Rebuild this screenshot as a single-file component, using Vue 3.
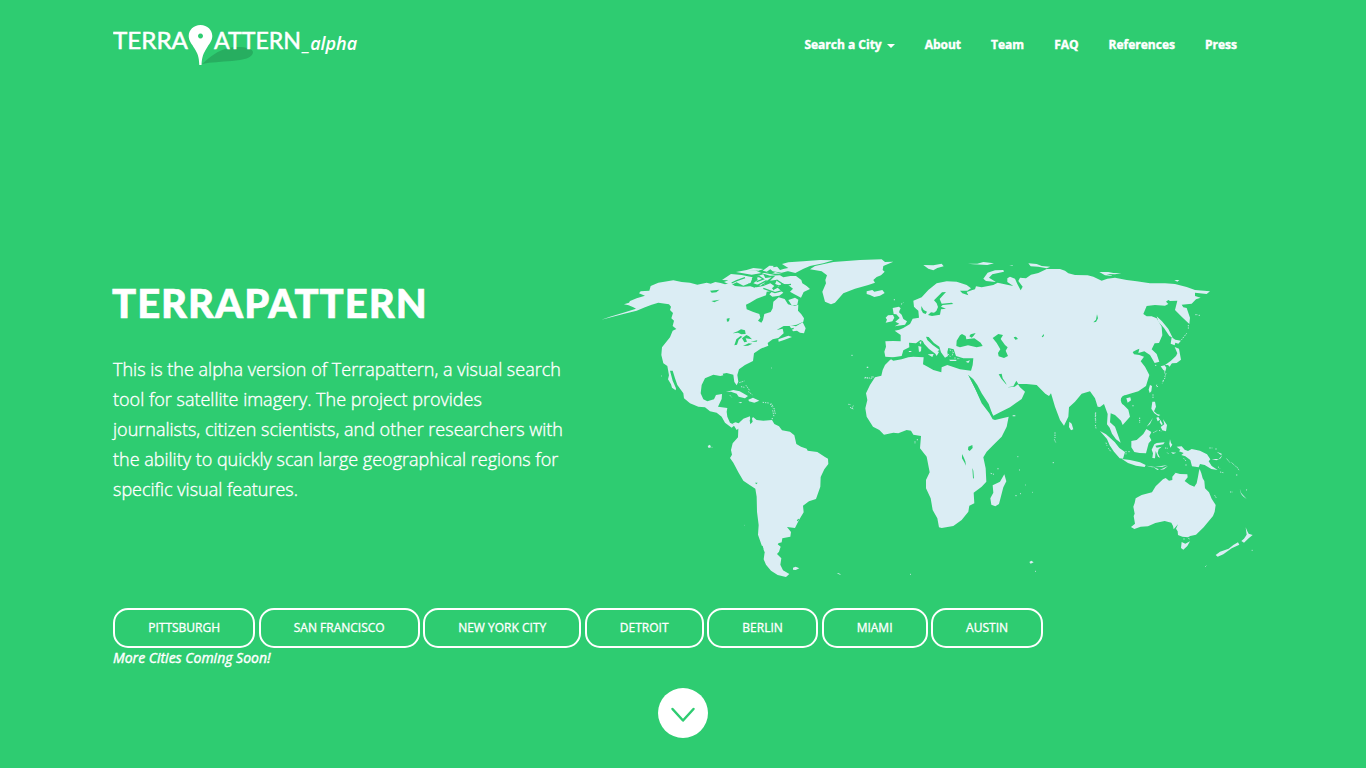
<script setup>
const nav = ['About', 'Team', 'FAQ', 'References', 'Press']
const cities = [
  { name: 'Pittsburgh', w: 142.3 },
  { name: 'San Francisco', w: 160.8 },
  { name: 'New York City', w: 158.2 },
  { name: 'Detroit', w: 118.8 },
  { name: 'Berlin', w: 111 },
  { name: 'Miami', w: 106 },
  { name: 'Austin', w: 112 },
]
</script>

<template>
  <div class="page">
    <header class="bar">
      <a class="brand">
        <svg class="logo" width="190" height="44" viewBox="0 0 190 44">
          <path class="shadow" d="M89 42 C98 34 104 29 115 26 C125 24 139 25 140 30 C140 36 130 38 119 39 C108 40 98 40 89 42Z" />
          <text x="0" y="26.500" textLength="75" lengthAdjust="spacingAndGlyphs">TERRA</text>
          <text x="101" y="26.500" textLength="87" lengthAdjust="spacingAndGlyphs">ATTERN</text>
          <path class="pin" fill-rule="evenodd" d="M87.500 3 C94.500 3 99.300 8 99.300 14 C99.300 19 96 22 93.500 26.500 C90.500 31.500 89 34 88.500 43 H86.300 C86 34 84.500 31.500 81.500 26.500 C79 22 75.700 19 75.700 14 C75.700 8 80.500 3 87.500 3Z M87.500 11.500 a2.500 2.500 0 1 0 .01 0Z" />
        </svg>
        <span class="alpha">_alpha</span>
      </a>
      <nav class="nav">
        <a class="drop">Search a City<i class="caret"></i></a>
        <a v-for="n in nav" :key="n">{{ n }}</a>
      </nav>
    </header>

    <main class="hero">
      <div class="copy">
        <h1>TERRAPATTERN</h1>
        <p>
          This is the alpha version of Terrapattern, a visual search<br />
          tool for satellite imagery. The project provides<br />
          journalists, citizen scientists, and other researchers with<br />
          the ability to quickly scan large geographical regions for<br />
          specific visual features.
        </p>
      </div>
      <svg class="map" width="660" height="330" viewBox="600 255 660 330">
        <!-- North America and Greenland -->
        <g transform="translate(590 250) scale(.33333)">
          <path d="M34 209L60 200L100 188L138 176L130 172L116 166L102 163L117 158L120 153L140 145L165 137L147 130L152 124L178 122L182 108L205 98L250 91L275 96L300 98L322 104L350 98L362 101L376 96L392 99L405 103L420 99L435 108L460 110L480 109L500 112L520 108L541 100L553 108L546 115L552 122L530 125L528 136L500 146L480 158L468 164L470 178L490 186L508 192L511 203L504 212L514 218L519 210L523 192L542 186L548 175L550 155L566 142L584 147L594 163L613 168L625 164L624 182L634 193L642 205L640 215L620 224L598 228L581 228L560 240L578 236L581 250L565 264L548 268L533 279L535 287L512 296L492 310L489 333L465 345L447 358L442 375L445 395L440 406L433 396L430 374L410 369L398 371L400 376L391 378L370 374L345 385L335 405L332 430L340 448L352 454L372 448L378 435L396 432L395 447L384 470L412 474L410 485L412 500L420 518L432 524L440 518L448 533L440 540L432 527L425 533L405 518L395 500L380 488L360 484L345 472L325 470L300 460L282 445L280 430L262 405L255 385L248 362L240 362L248 392L258 415L257 421L246 413L243 403L234 388L237 376L232 348L220 340L214 315L216 292L240 262L248 242L259 237L248 228L252 212L244 205L249 189L240 180L243 170L237 163L205 158L185 164L165 172L140 182L100 192Z" />
          <path d="M396 90L423 72L455 75L488 82L482 98L460 107L440 97L423 105L402 96L415 91ZM438 66L470 60L498 62L515 69L485 74L455 69ZM470 60L490 54L520 57L506 62ZM500 79L520 73L526 84L545 82L531 92L512 107L490 100L503 90ZM516 70L530 66L543 72L556 66L576 72L568 76L540 77ZM518 62L538 47L560 48L570 60L598 62L575 68L548 64L541 58L530 65ZM576 42L595 37L640 34L690 30L730 31L700 40L660 48L639 57L616 69L592 63L560 63L583 56L595 54Z" />
          <path d="M540 92L556 77L570 76L580 82L601 78L618 78L634 90L637 100L650 108L660 117L641 126L633 143L612 132L600 125L609 116L592 103L574 102L566 111L555 103L561 89ZM595 150L615 143L625 149L622 164L606 167ZM552 119L563 113L580 128L568 137L547 140L538 133ZM597 225L618 229L638 217L647 235L642 250L630 248L621 242L609 244ZM565 268L595 257L606 261L582 270L566 275Z" />
          <path d="M408 426L430 420L449 424L474 438L465 445L446 440L440 431L423 425ZM475 449L489 443L508 452L493 458L477 454ZM445 456l12 1-5 3z" />
          <path class="dots" d="M448 398L463 393M453 410L463 412M468 406L480 423M475 425L487 434M518 457L536 459M541 462L549 475M548 481L552 500M420 436l5 6M543 354h2M213 378h2M520 100l6 4" />
          <path d="M660 58L675 48L730 36L810 30L875 28L885 36L910 35L880 48L878 60L884 65L873 76L860 81L850 90L855 98L835 105L795 116L760 130L735 158L723 163L705 155L697 125L708 100L706 90L711 76L695 64Z" />
          <path d="M830 124L847 120L853 125L877 120L884 129L870 137L853 141L840 135L830 132Z" />
          <path class="water" d="M360 122L388 119L379 127L365 128ZM364 153L389 149L373 157ZM410 206L419 204L417 214L411 215ZM428 250L443 244L453 238L465 241L467 252L454 253L444 248ZM433 286L439 268L452 258L457 260L446 269L441 284ZM456 265L469 255L477 259L486 268L467 265L471 275L463 277ZM459 288L476 280L487 281L474 287ZM482 275L502 271L500 275Z" />
          <path class="cut" d="M425 99L440 92L465 83M486 86L507 79L520 87L500 95M475 102L493 111L530 92M560 90L575 100L590 108M508 64L555 73L616 72M520 115L555 128L590 118M551 102L567 108L603 103M550 50L575 45M595 240L611 235" />
        </g>

        <!-- South America -->
        <g transform="translate(680 390) scale(.33333)">
          <path d="M157 101L166 97L176 100L190 86L210 79L211 93L219 81L230 90L250 92L276 90L283 102L297 109L306 121L330 125L343 136L349 162L363 170L380 176L383 182L412 186L435 201L444 206L445 222L433 238L422 261L421 290L408 327L387 334L369 347L371 367L357 390L345 414L321 411L333 426L331 440L307 445L305 457L293 463L302 470L297 485L291 492L304 505L301 524L309 541L328 552L318 561L293 555L273 542L258 524L251 508L254 487L245 466L234 434L236 405L231 365L230 320L226 296L210 286L190 272L175 247L160 218L150 204L156 194L153 180L158 160L174 142L175 116Z" />
          <path d="M83 168l7-4 3 8-7 2zM339 533l8-3 11 5-11 5-8-1zM470 550l7 0 7 6z" />
          <path class="dots" d="M273 40L280 50M282 54L286 72M275 86h4M505 43l8 1M515 56l5-9M193 406h1M95 172h2" />
          <path class="water" d="M225 278l8 0-4 5zM209 91l6-9 3 13-7 8z" />
          <path class="cut" d="M246 468L249 478M245 485L252 490M295 462L302 459M356 387L352 393" />
        </g>

        <!-- Africa -->
        <g transform="translate(850 340) scale(.33333)">
          <path d="M120 60L105 75L98 90L94 107L75 112L60 135L48 160L52 180L46 205L50 230L69 260L88 270L102 284L130 278L145 280L170 270L183 272L190 284L213 288L210 325L230 350L239 397L228 420L228 445L242 475L248 510L262 535L267 562L275 564L310 558L335 540L355 515L358 497L373 490L371 458L395 440L409 425L407 385L400 352L410 335L430 315L455 290L470 260L476 230L460 234L435 240L428 238L418 220L395 190L375 145L355 105L400 90L340 20L150 40Z" />
          <path d="M463 403L469 424L460 442L447 492L436 499L424 494L421 475L430 458L428 436L450 425Z" />
          <path d="M488 226h8v3h-8zM538 666l6-4 7 5-9 4z" />
          <path class="dots" d="M43 114L60 114M64 111L72 110M51 82h5M4 46h4M0 202L10 207M195 304v8M202 297v5M422 400l10 3M496 467h5M510 461h3M526 435h2M502 350h3M507 390h3M180 703h3M555 694h3M547 457h2M444 384v4" />
          <path class="water" d="M355 320l12-5 1 9-9 9-5-4zM336 342l5 10 5 12 2 13-5-10-7-12zM367 384l3 8 2 24-3-2z" />
        </g>

        <!-- Europe and Asia -->
        <g transform="translate(860 250) scale(.33333)">
          <path d="M76 320L73 305L78 290L76 274L100 273L122 274L122 255L104 242L118 239L130 234L150 222L158 206L177 203L175 182L168 176L162 170L160 152L185 142L205 120L230 100L260 94L290 95L320 105L333 115L322 122L300 122L307 130L325 136L320 126L335 121L345 118L348 109L365 112L400 105L413 98L445 105L460 108L442 96L442 85L450 80L465 86L472 102L482 121L488 110L475 93L480 83L498 85L513 74L535 69L560 57L600 57L615 62L625 70L645 75L683 76L700 80L725 92L742 86L765 83L800 90L830 94L870 100L915 100L945 102L980 111L1005 120L1050 124L1040 132L1005 128L1005 138L1022 143L1008 148L995 161L965 164L970 172L980 174L990 203L988 222L965 200L945 180L952 152L930 153L925 150L918 155L925 162L915 167L885 165L860 168L850 192L860 199L875 199L890 205L905 230L907 256L897 279L884 280L875 298L890 312L898 335L884 339L870 315L853 304L835 309L838 296L829 300L818 306L822 313L838 315L852 320L842 334L855 350L868 375L858 408L835 424L805 433L788 438L782 450L785 459L805 479L810 500L788 525L783 512L765 495L752 490L750 517L765 530L775 558L782 578L768 568L756 551L749 533L741 523L743 492L732 462L720 471L713 470L705 445L690 424L665 431L645 455L627 472L625 500L612 527L600 510L585 470L573 430L567 438L556 431L530 405L500 402L475 402L469 392L460 409L442 412L438 400L428 385L425 371L416 373L424 386L440 405L447 412L464 410L474 403L480 412L495 425L485 447L450 472L420 487L400 497L385 470L360 430L325 375L300 335Z" />
          <path class="water" d="M92 327L100 322L125 318L130 301L148 292L147 278L168 280L181 270L190 274L200 284L218 300L226 307L239 300L218 285L202 270L198 260L206 261L222 279L238 290L243 307L255 323L264 318L262 306L265 294L281 298L288 318L310 325L340 325L338 345L333 362L300 358L262 345L245 352L244 367L220 360L203 350L189 343L191 322L160 320L145 322L125 328L100 332Z" />
          <path class="water" d="M289 288L290 272L300 256L306 252L317 258L319 268L343 265L362 278L368 288L350 292L324 286L300 292ZM328 259L332 253L347 249L341 257L335 263ZM398 264L415 252L429 255L422 267L435 285L443 292L437 302L444 318L432 324L416 319L414 309L421 298L410 279ZM461 262L468 260L474 267L466 269ZM545 260l6-8 1 5-4 5zM711 193l3 12-6 11-8 1 8-8zM564 254l9-1M258 126L246 127L231 142L222 151L230 160L234 171L229 183L222 188L213 187L204 195L216 198L240 194L243 178L258 176L243 170L248 165L280 162L275 158L245 161L239 147ZM184 168L191 180L201 185L197 192L189 189L184 180ZM325 375L340 388L352 405L365 430L386 462L398 495L378 475L360 445L345 415Z" />
          <path d="M187 271L200 278L214 293L237 306L230 318L226 311L207 297L193 282ZM203 313L221 312L217 321ZM175 288L184 290L183 304L177 306ZM178 276l6-2-1 10zM267 329h22v4h-18zM317 335l13-4-5 8zM146 303h8v3h-7z" />
          <path class="dots" d="M264 312l7 8M269 300l9 3M280 306l-3 10M285 322v6M292 326h8" />
          <path d="M98 174L117 170L122 175L119 181L117 187L125 194L130 207L141 214L135 224L104 229L118 221L106 215L119 204L109 193L101 192ZM84 196L99 195L103 203L97 214L77 218L81 209L77 203Z" />
          <path d="M190 45L220 46L245 41L251 49L232 54L220 61L205 56ZM370 86L383 68L405 61L430 60L432 65L397 73L387 83L408 96L378 93ZM324 41L352 41L370 36L402 40L382 45L340 43ZM505 40L530 42L545 48L571 50L560 55L535 50L512 49ZM718 66L745 66L760 69L784 70L765 73L740 72L760 78L735 76ZM943 90h15l-6 5zM448 45h10v2z" />
          <path d="M890 199L906 214L925 237L938 263L928 258L912 234L895 215ZM935 262L946 269L963 272L955 281L946 278L944 286L932 281ZM944 291L957 296L963 329L950 339L937 340L930 344L915 345L932 333L948 318L952 310ZM902 349L914 346L919 353L916 364L910 360ZM924 345l10-3-5 8z" />
          <path d="M870 405l6 3-2 16-5 5-3-10zM628 515l7 6 5 17-7 3-6-10z" />
          <path class="water" d="M783 444l12-8 4 4-5 14 2 12-10-4z" />
          <path d="M799 445l12-3 2 9-10 7z" />
          <path class="dots" d="M103 147v4M123 163l7-5M985 225v12M980 250l-16 20M1006 194h8M1016 196h5M918 370l-4 12M910 392l-3 8M890 410l6-1M707 487v15M707 508v10M20 352h5M15 382l10 2M32 386l8-4M885 346h5" />
        </g>

        <!-- South-east Asia and Oceania -->
        <g transform="translate(1040 370) scale(.33333)">
          <path d="M180 183L198 193L224 216L238 234L255 246L249 266L239 265L222 245L209 226L201 207ZM246 267L270 270L300 277L317 285L314 291L288 287L264 279ZM274 213L290 210L310 192L319 177L334 186L328 199L334 211L326 220L318 250L299 249L283 246L274 232Z" />
          <path d="M337 95L345 95L348 110L342 124L351 132L361 135L355 138L343 130L334 116ZM369 148L381 165L378 184L367 181L362 171L373 163ZM349 143l6-2 5 8-7 5zM361 149l7 13-3 4-6-9zM339 143L331 155L320 170L330 162Z" />
          <path d="M343 223L350 219L374 217L370 223L346 227L350 233L365 230L356 238L353 249L360 263L354 260L347 243L345 265L337 264L339 250L335 239ZM319 287L345 291L382 285L368 290L336 292ZM359 300L384 288L372 298ZM341 292l16 6-5 2zM390 208l3 11 4 5-6 9-3-12zM393 247l16 1-10 4zM410 230L425 229L434 239L444 243L455 237L480 242L501 253L511 268L506 274L515 288L533 300L514 297L494 285L480 282L476 292L456 289L451 270L436 259L424 255L431 249L417 244L421 239ZM515 267L536 267L547 256L542 265L529 271ZM530 245l15 6-1 5z" />
          <path d="M479 297L484 310L488 325L493 333L495 355L507 367L515 386L527 405L524 425L519 438L491 472L468 494L451 498L444 502L427 500L414 495L413 484L408 476L414 463L401 478L399 468L394 458L374 453L346 459L324 469L302 470L283 477L273 471L285 461L281 438L284 431L280 410L284 399L287 385L305 375L336 367L347 349L369 328L377 324L387 332L397 330L397 320L407 308L400 307L420 312L442 313L443 322L434 333L449 344L463 350L470 340L474 320L477 303Z" />
          <path d="M425 516L436 521L450 514L442 528L430 539L423 534ZM617 472L622 484L626 491L638 495L626 505L612 518L604 513L612 506L620 494ZM594 517L598 524L575 535L550 553L533 560L527 555L540 545L566 536L580 525ZM599 355L604 370L620 387L609 379L603 371Z" />
          <path class="dots" d="M166 130v22M166 165l2 10M45 187v17M43 208l4 9M38 278h4M339 73v13M374 4v8M369 33l8-12M348 47l6-4M299 143v16M279 105v6M340 188l13-7M357 181l7 3M375 234l9 1M328 190h3M431 265l7 8M436 285h6M560 266l10 12M575 278l12 11M590 290l8 12M534 290l6 6M540 306l10 2M588 315h5M508 234h9M526 237h5M524 376l5 8M570 366h8M618 361l4-3M635 541h3M496 590l4-4M258 243v10M265 245h4M205 235l8 10M198 218l3 9M382 248l5 5M430 507h5M445 505l4 2" />
        </g>
      </svg>
    </main>

    <section class="cities">
      <div class="list">
        <a v-for="c in cities" :key="c.name" class="city" :style="{ width: c.w + 'px' }">{{ c.name }}</a>
      </div>
      <em>More Cities Coming Soon!</em>
    </section>

    <a class="down">
      <svg width="50" height="50" viewBox="0 0 50 50">
        <path d="M14.500 21 L25 32.500 L35.500 21" />
      </svg>
    </a>
  </div>
</template>

<style>
body { margin: 0; background: #2ecc71; overflow: hidden; }
</style>

<style scoped>
.page {
  width: 1366px;
  height: 768px;
  box-sizing: border-box;
  padding: 0 113px;
  background: #2ecc71;
  color: #fff;
  font-family: "Open Sans", sans-serif;
  display: flex;
  flex-direction: column;
  overflow: hidden;
}
.bar { display: flex; justify-content: space-between; height: 90px; flex: none; }
.brand { display: flex; padding-top: 22px; }
.logo { display: block; }
.logo text { font-family: Lato, sans-serif; font-size: 24px; fill: #fff; stroke: #fff; stroke-width: 0.5px; }
.pin { fill: #fff; }
.shadow { fill: #27ae60; }
.alpha { font-size: 18px; font-style: italic; font-weight: 600; line-height: 24px; margin-top: 9px; }
.nav { display: flex; align-items: flex-start; gap: 30px; padding: 35px 16px 0 0; font-size: 12px; font-weight: 700; line-height: 20px; -webkit-text-stroke: 0.4px #fff; }
.drop { display: flex; align-items: center; }
.caret { margin: 2px 0 0 5px; border: 4px solid transparent; border-top-color: #fff; border-bottom: 0; }
.hero { display: flex; height: 518px; flex: none; }
.copy { width: 487px; flex: none; padding-top: 188px; }
h1 { margin: 0 0 0 -1px; font-family: Lato, sans-serif; font-weight: 900; font-size: 40px; line-height: 50px; letter-spacing: 1px; white-space: nowrap; -webkit-text-stroke: 0.6px #fff; }
p { margin: 26px 0 0; font-size: 18px; font-weight: 300; line-height: 30px; white-space: nowrap; -webkit-text-stroke: 0.35px #fff; }
.map { flex: none; margin-top: 165px; fill: #dbedf4; }
.water { fill: #2ecc71; }
.cut { fill: none; stroke: #2ecc71; stroke-width: 4; }
.dots { fill: none; stroke: #dbedf4; stroke-width: 2.5; stroke-dasharray: 4 3; }
.cities { height: 80px; flex: none; }
.list { display: flex; gap: 3.5px; }
.city {
  box-sizing: border-box;
  height: 40px;
  flex: none;
  border: 2px solid #fff;
  border-radius: 15px;
  text-align: center;
  text-transform: uppercase;
  font-size: 12px;
  font-weight: 400;
  line-height: 36px;
  -webkit-text-stroke: 0.3px #fff;
}
em { display: block; font-size: 14px; line-height: 20px; font-weight: 400; -webkit-text-stroke: 0.4px #fff; }
.down { align-self: center; width: 50px; height: 50px; border-radius: 50%; background: #fff; }
.down svg { display: block; fill: none; stroke: #2ecc71; stroke-width: 2.5; stroke-linecap: round; stroke-linejoin: round; }
</style>
